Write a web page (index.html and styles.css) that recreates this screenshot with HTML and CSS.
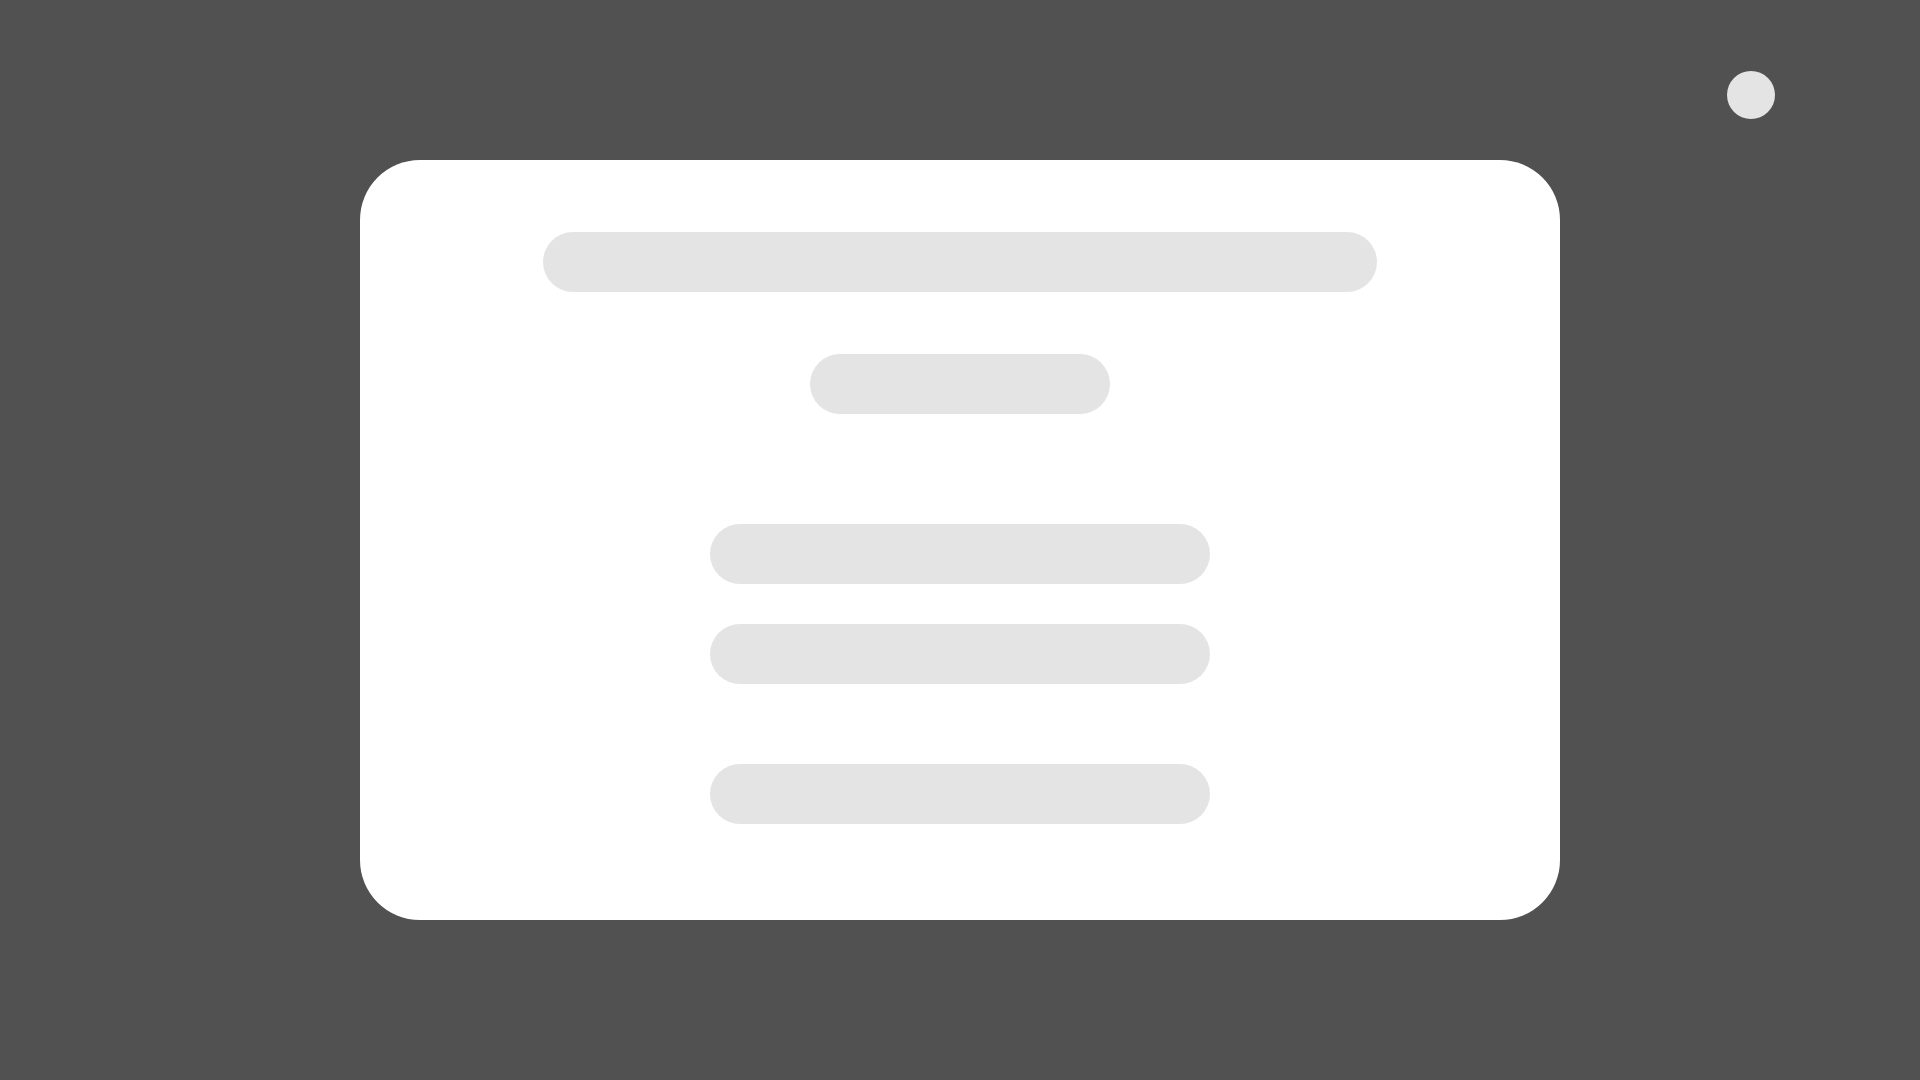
FILE: index.html
```html
<!DOCTYPE html>
<html>
<head>
<meta charset="utf-8">
<link rel="stylesheet" href="styles.css">
</head>
<body>
<div class="dot"></div>
<main class="card">
  <div class="bar bar-title"></div>
  <div class="bar bar-sub"></div>
  <div class="bar bar-field bar-first"></div>
  <div class="bar bar-field bar-second"></div>
  <div class="bar bar-field bar-action"></div>
</main>
</body>
</html>
```
FILE: styles.css
```css
html, body {
  margin: 0;
  padding: 0;
  width: 1920px;
  height: 1080px;
  background: #515151;
  overflow: hidden;
  font-family: "Liberation Sans", Arial, sans-serif;
}
body {
  display: flex;
  align-items: center;
  justify-content: center;
}
.dot {
  position: absolute;
  top: 71px;
  right: 145px;
  width: 48px;
  height: 48px;
  border-radius: 50%;
  background: #e4e4e4;
}
.card {
  box-sizing: border-box;
  width: 1200px;
  height: 760px;
  background: #ffffff;
  border-radius: 60px;
  padding-top: 72px;
  display: flex;
  flex-direction: column;
  align-items: center;
}
.bar {
  height: 60px;
  border-radius: 30px;
  background: #e4e4e4;
  flex: none;
}
.bar-title {
  width: 834px;
}
.bar-sub {
  width: 300px;
  margin-top: 62px;
}
.bar-field {
  width: 500px;
}
.bar-first {
  margin-top: 110px;
}
.bar-second {
  margin-top: 40px;
}
.bar-action {
  margin-top: 80px;
}
```
